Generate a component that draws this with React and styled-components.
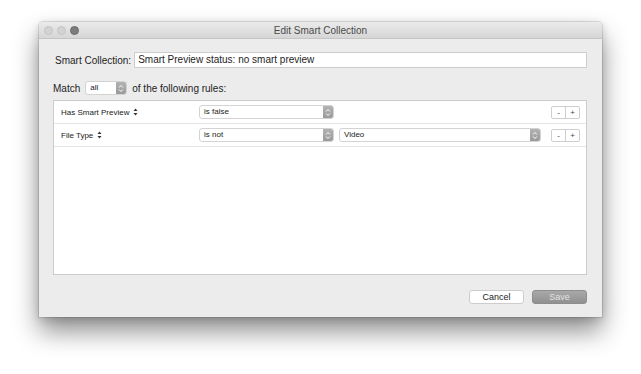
import styled, { createGlobalStyle } from 'styled-components';

const GlobalStyle = createGlobalStyle`
  body {
    margin: 0;
    background: #ffffff;
    font-family: "Liberation Sans", Arial, sans-serif;
    color: #1d1d1d;
  }
`;

function Stepper() {
  return (
    <StepperBox>
      <svg width="6" height="9" viewBox="0 0 6 9">
        <path d="M1 3.5 L3 1.5 L5 3.5 M1 5.5 L3 7.5 L5 5.5" fill="none" stroke="#fff" strokeWidth="1" />
      </svg>
    </StepperBox>
  );
}

function SortMark() {
  return (
    <svg width="5" height="8" viewBox="0 0 5 8">
      <path d="M2.5 0.5 L4.5 3 L0.5 3 Z M2.5 7.5 L4.5 5 L0.5 5 Z" fill="#333" />
    </svg>
  );
}

function PopUp({ width, children }) {
  return (
    <Select width={width}>
      <SelectText>{children}</SelectText>
      <Stepper />
    </Select>
  );
}

const rules = [
  { field: 'Has Smart Preview', op: 'is false' },
  { field: 'File Type', op: 'is not', value: 'Video' },
];

export default function App() {
  return (
    <Page>
      <GlobalStyle />
      <Window>
        <TitleBar>
          <Lights>
            <Light />
            <Light />
            <Light dark />
          </Lights>
          <Title>Edit Smart Collection</Title>
          <Lights />
        </TitleBar>
        <Body>
          <NameRow>
            <Label>Smart Collection:</Label>
            <NameInput>Smart Preview status: no smart preview</NameInput>
          </NameRow>
          <MatchRow>
            <Label>Match</Label>
            <PopUp width={42}>all</PopUp>
            <Label>of the following rules:</Label>
          </MatchRow>
          <Panel>
            {rules.map((rule) => (
              <RuleRow key={rule.field}>
                <Field>
                  {rule.field}
                  <SortMark />
                </Field>
                <PopUp width={135}>{rule.op}</PopUp>
                {rule.value && (
                  <ValueGap>
                    <PopUp width={202}>{rule.value}</PopUp>
                  </ValueGap>
                )}
                <Spacer />
                <PlusMinus>
                  <SmallButton>-</SmallButton>
                  <SmallButton>+</SmallButton>
                </PlusMinus>
              </RuleRow>
            ))}
          </Panel>
          <Footer>
            <Button>Cancel</Button>
            <Button primary>Save</Button>
          </Footer>
        </Body>
      </Window>
    </Page>
  );
}

const Page = styled.div`
  padding: 22px 0 60px 39px;
`;

const Window = styled.div`
  width: 563px;
  height: 295px;
  background: #ececec;
  border-radius: 4px 4px 0 0;
  box-shadow: 0 0 0 1px rgba(0, 0, 0, 0.1), 0 14px 26px rgba(0, 0, 0, 0.45),
    0 2px 8px rgba(0, 0, 0, 0.15);
  display: flex;
  flex-direction: column;
`;

const TitleBar = styled.div`
  height: 16px;
  flex: none;
  display: flex;
  align-items: center;
  background: linear-gradient(#ebebeb, #d6d6d6);
  border-bottom: 1px solid #c4c4c4;
  border-radius: 4px 4px 0 0;
`;

const Lights = styled.div`
  width: 50px;
  display: flex;
  gap: 4px;
  padding-left: 5px;
`;

const Light = styled.span`
  width: 9px;
  height: 9px;
  border-radius: 50%;
  box-sizing: border-box;
  background: ${(p) => (p.dark ? '#7c7c7e' : '#d3d3d3')};
  border: 1px solid ${(p) => (p.dark ? '#6c6c6e' : '#c4c4c4')};
`;

const Title = styled.div`
  flex: 1;
  text-align: center;
  font-size: 10px;
  color: #4a4a4a;
`;

const Body = styled.div`
  flex: 1;
  display: flex;
  flex-direction: column;
  padding: 13px 15px 13px 14px;
`;

const NameRow = styled.div`
  display: flex;
  align-items: center;
  gap: 3px;
  padding-left: 2px;
`;

const Label = styled.span`
  font-size: 10px;
  color: #1d1d1d;
  white-space: nowrap;
`;

const NameInput = styled.div`
  flex: 1;
  height: 16px;
  box-sizing: border-box;
  background: #fff;
  border: 1px solid #cdcdcd;
  font-size: 10px;
  line-height: 14px;
  padding-left: 3px;
`;

const MatchRow = styled.div`
  display: flex;
  align-items: center;
  gap: 5px;
  margin-top: 13px;
`;

const Select = styled.div`
  width: ${(p) => p.width}px;
  height: 14px;
  box-sizing: border-box;
  display: flex;
  background: #fff;
  border: 1px solid #d3d3d3;
  border-radius: 3px;
  overflow: hidden;
`;

const SelectText = styled.span`
  flex: 1;
  font-size: 8px;
  line-height: 12px;
  padding-left: 4px;
  color: #222;
`;

const StepperBox = styled.span`
  width: 10px;
  display: flex;
  align-items: center;
  justify-content: center;
  background: linear-gradient(#b2b2b2, #9a9a9a);
`;

const Panel = styled.div`
  margin-top: 5px;
  height: 175px;
  box-sizing: border-box;
  background: #fff;
  border: 1px solid #cbcbcb;
`;

const RuleRow = styled.div`
  height: 22px;
  display: flex;
  align-items: center;
  padding: 0 6px 0 7px;
  border-bottom: 1px solid #e4e4e4;
`;

const Field = styled.div`
  width: 138px;
  display: flex;
  align-items: center;
  gap: 4px;
  font-size: 8px;
  color: #222;
`;

const ValueGap = styled.div`
  margin-left: 5px;
`;

const Spacer = styled.div`
  flex: 1;
`;

const PlusMinus = styled.div`
  display: flex;
  border: 1px solid #cfcfcf;
  border-radius: 2px;
  background: #fff;
`;

const SmallButton = styled.span`
  width: 13px;
  height: 11px;
  display: flex;
  align-items: center;
  justify-content: center;
  font-size: 8px;
  color: #444;
  & + & {
    border-left: 1px solid #cfcfcf;
  }
`;

const Footer = styled.div`
  margin-top: auto;
  display: flex;
  justify-content: flex-end;
  gap: 8px;
`;

const Button = styled.div`
  width: 55px;
  height: 14px;
  box-sizing: border-box;
  border-radius: 3px;
  font-size: 9px;
  line-height: 12px;
  text-align: center;
  border: 1px solid ${(p) => (p.primary ? '#8e8e8e' : '#cdcdcd')};
  background: ${(p) => (p.primary ? 'linear-gradient(#a9a9a9, #919191)' : '#fff')};
  color: ${(p) => (p.primary ? '#e2e2e2' : '#222')};
`;
